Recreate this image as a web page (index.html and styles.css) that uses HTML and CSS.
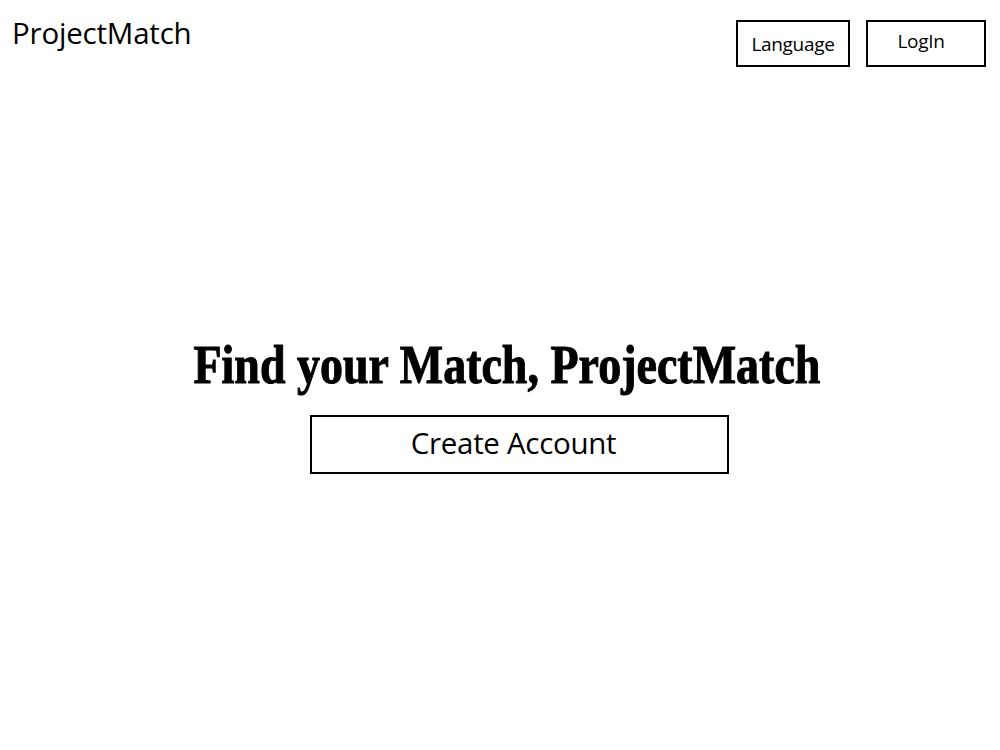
FILE: index.html
```html
<!DOCTYPE html>
<html>
<head>
<meta charset="utf-8">
<link rel="stylesheet" href="styles.css">
</head>
<body>
<header class="topbar">
  <div class="brand">ProjectMatch</div>
  <nav class="actions">
    <button class="btn btn-lang">Language</button>
    <button class="btn btn-login">LogIn</button>
  </nav>
</header>
<main class="hero">
  <h1 class="headline">Find your Match, ProjectMatch</h1>
  <button class="btn-create">Create Account</button>
</main>
</body>
</html>
```
FILE: styles.css
```css
html, body {
  margin: 0;
  padding: 0;
  background: #fff;
  color: #000;
  width: 1000px;
  height: 750px;
  overflow: hidden;
}
body {
  font-family: "Open Sans", sans-serif;
}
.topbar {
  display: flex;
  justify-content: space-between;
  align-items: flex-start;
  padding: 0 14px 0 12px;
  height: 80px;
}
.brand {
  font-size: 29.5px;
  line-height: 1;
  margin-top: 18px;
  letter-spacing: -0.2px;
}
.actions {
  display: flex;
  gap: 16px;
  margin-top: 20px;
}
.btn {
  font-family: "Open Sans", sans-serif;
  font-size: 19px;
  background: #fff;
  color: #000;
  border: 2px solid #000;
  height: 47px;
  padding: 0;
  margin: 0;
  box-sizing: border-box;
  letter-spacing: -0.3px;
}
.btn-lang {
  width: 114px;
}
.btn-login {
  width: 120px;
  padding-bottom: 6px;
  padding-right: 10px;
}
.hero {
  display: flex;
  flex-direction: column;
  align-items: center;
  margin-top: 260px;
}
.headline {
  font-family: "Liberation Serif", serif;
  font-weight: bold;
  font-size: 54px;
  margin: 0;
  line-height: 50px;
  margin-left: 14px;
  transform: scaleX(0.852);
  -webkit-text-stroke: 1px #000;
  white-space: nowrap;
}
.btn-create {
  margin-top: 25px;
  width: 419px;
  height: 59px;
  border: 2px solid #000;
  background: #fff;
  font-family: "Open Sans", sans-serif;
  font-size: 29.5px;
  letter-spacing: -0.3px;
  color: #000;
  box-sizing: border-box;
  margin-left: 39px;
  padding: 0 12px 5px 0;
}
```
